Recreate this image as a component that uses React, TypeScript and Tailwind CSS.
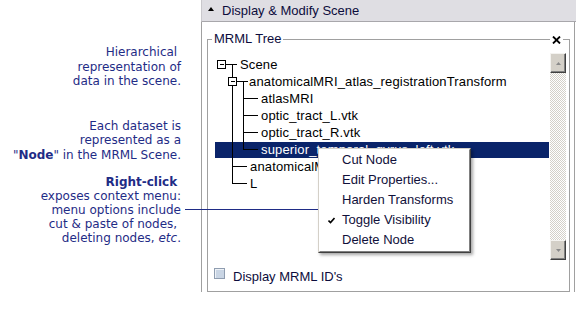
import React from "react";

const navy = "text-[#1f2c86]";

function TreeLines() {
  return (
    <svg className="absolute inset-0 pointer-events-none" width="340" height="207" shapeRendering="crispEdges">
      <g stroke="#000" strokeWidth="1" fill="none">
        {/* Scene expander */}
        <rect x="9.5" y="7.5" width="8" height="8" fill="#fff" />
        <line x1="11.5" y1="11.5" x2="16" y2="11.5" />
        <line x1="18" y1="11.5" x2="29" y2="11.5" />
        <line x1="24.5" y1="11.5" x2="24.5" y2="24.5" />
        {/* anatomicalMRI expander */}
        <rect x="20.5" y="24.5" width="8" height="8" fill="#fff" />
        <line x1="22.5" y1="28.5" x2="27" y2="28.5" />
        <line x1="29" y1="28.5" x2="40" y2="28.5" />
        <line x1="24.5" y1="32.5" x2="24.5" y2="130.5" />
        <line x1="35.5" y1="28.5" x2="35.5" y2="96.5" />
        {[45.5, 62.5, 79.5, 96.5].map((y) => (
          <line key={y} x1="35.5" y1={y} x2="50" y2={y} />
        ))}
        {[113.5, 130.5].map((y) => (
          <line key={y} x1="24.5" y1={y} x2="39" y2={y} />
        ))}
      </g>
    </svg>
  );
}

function ScrollButton({ up }: { up?: boolean }) {
  return (
    <div className="h-[20px] bg-[#d4d0c8] border border-t-[#f4f3f0] border-l-[#f4f3f0] border-r-[#404040] border-b-[#404040] shadow-[inset_-1px_-1px_0_#808080] flex items-center justify-center">
      <svg width="5" height="3" viewBox="0 0 5 3">
        <path d={up ? "M2.5 0 L5 3 L0 3 Z" : "M0 0 L5 0 L2.5 3 Z"} fill="#8a8a8a" />
      </svg>
    </div>
  );
}

const menuItems = ["Cut Node", "Edit Properties...", "Harden Transforms", "Toggle Visibility", "Delete Node"];

export default function App() {
  const rows: { label: string; pl: string; sel?: boolean }[] = [
    { label: "Scene", pl: "pl-[32px]" },
    { label: "anatomicalMRI_atlas_registrationTransform", pl: "pl-[41px]" },
    { label: "atlasMRI", pl: "pl-[53px]" },
    { label: "optic_tract_L.vtk", pl: "pl-[53px]" },
    { label: "optic_tract_R.vtk", pl: "pl-[53px]" },
    { label: "superior_temporal_gyrus_left.vtk", pl: "pl-[46px]", sel: true },
    { label: "anatomicalMRI.nrrd", pl: "pl-[42px]" },
    { label: "L", pl: "pl-[42px]" },
  ];

  return (
    <div className="w-[576px] h-[323px] bg-white relative overflow-hidden flex font-['Liberation_Sans',Arial,sans-serif]">
      {/* annotations */}
      <div className={`w-[201px] shrink-0 pr-[20px] text-right text-[12px] ${navy} font-['DejaVu_Sans',Verdana,sans-serif]`}>
        <p className="mt-[45px] leading-[14.5px]">
          Hierarchical&nbsp;<br />representation of<br />data in the scene.
        </p>
        <p className="mt-[30px] leading-[14.5px]">
          Each dataset is<br />represented as a<br />"<b>Node</b>" in the MRML Scene.
        </p>
        <p className="mt-[13px] leading-[14px]">
          <b>Right-click</b>&nbsp;<br />exposes context menu:<br />menu options include<br />
          cut &amp; paste of nodes,&nbsp;<br />deleting nodes, <i>etc</i>.
        </p>
      </div>

      {/* panel */}
      <div className="w-[375px] flex flex-col">
        <div className="h-[22px] shrink-0 bg-[#dfdee3] border-l border-[#c9c8cc] border-b border-b-[#a8a7ab] flex items-center pl-[6px] gap-[8px]">
          <svg width="6" height="4" viewBox="0 0 6 4" className="-mt-[3px]">
            <path d="M3 0 L6 4 L0 4 Z" fill="#000" />
          </svg>
          <span className="text-[13px] text-[#0c0c3c]">Display &amp; Modify Scene</span>
        </div>

        <div className="border-l border-r border-[#a0a0a0] mr-[1px]">
          <fieldset className="relative mt-[9px] ml-[5px] mr-[4px] border border-[#a0a0a0]">
            <legend className="ml-[4px] px-[2px] text-[13px] leading-[16px] text-[#0c0c3c]">MRML Tree</legend>
            <div className="absolute right-[6px] -top-[12px] bg-white px-[2px] h-[9px] flex items-center">
              <svg width="9" height="8" viewBox="0 0 9 8">
                <path d="M1 0.5 L8 7.5 M8 0.5 L1 7.5" stroke="#000" strokeWidth="1.8" />
              </svg>
            </div>

            <div className="pt-[6px] pr-[3px] flex">
              <div className="relative flex-1 h-[207px] pt-[3px]">
                {rows.map((r) =>
                  r.sel ? (
                    <div key={r.label} className="h-[17px] pt-[1px] pl-[7px] pr-[1px]">
                      <div className={`h-[16px] bg-[#0a246a] text-white flex items-center ${r.pl} text-[13px] tracking-[0.15px] whitespace-nowrap overflow-hidden`}>
                        {r.label}
                      </div>
                    </div>
                  ) : (
                    <div key={r.label} className={`h-[17px] flex items-center ${r.pl} text-[13px] tracking-[0.15px] text-black whitespace-nowrap`}>
                      {r.label}
                    </div>
                  )
                )}
                <TreeLines />
              </div>
              <div className="w-[16px] h-[207px] flex flex-col">
                <ScrollButton up />
                <div className="flex-1 bg-[image:repeating-conic-gradient(#d4d0c8_0%_25%,#ffffff_0%_50%)] bg-[length:2px_2px]" />
                <ScrollButton />
              </div>
            </div>

            <div className="mt-[8px] pl-[6px] pb-[6px] flex items-start gap-[8px]">
              <div className="w-[11px] h-[11px] bg-[#c9d5e4] border border-[#8f9db0] shadow-[inset_1px_1px_0_#eef2f7]" />
              <span className="text-[13px] leading-[16px] mt-[1px] text-[#0c0c3c]">Display MRML ID's</span>
            </div>
          </fieldset>
        </div>
      </div>

      {/* callout line */}
      <div className="absolute left-[185px] top-[209px] w-[133px] h-[1px] bg-[#1f2c86]" />

      {/* context menu */}
      <div className="absolute left-[318px] top-[148px] w-[153px] bg-white border border-t-[#d4d0c8] border-l-[#d4d0c8] border-r-[#404040] border-b-[#404040] shadow-[2px_2px_3px_rgba(0,0,0,0.35)]">
        <div className="border border-t-white border-l-white border-r-[#808080] border-b-[#808080] pb-[1px]">
          {menuItems.map((m) => (
            <div key={m} className="h-[20px] flex items-center text-[13px] text-[#10103a]">
              <span className="w-[22px] pl-[8px] flex items-center">
                {m === "Toggle Visibility" && (
                  <svg width="7" height="7" viewBox="0 0 7 7">
                    <path d="M0.5 3.5 L2.5 5.5 L6.5 1" stroke="#000" strokeWidth="1.6" fill="none" />
                  </svg>
                )}
              </span>
              {m}
            </div>
          ))}
        </div>
      </div>
    </div>
  );
}
